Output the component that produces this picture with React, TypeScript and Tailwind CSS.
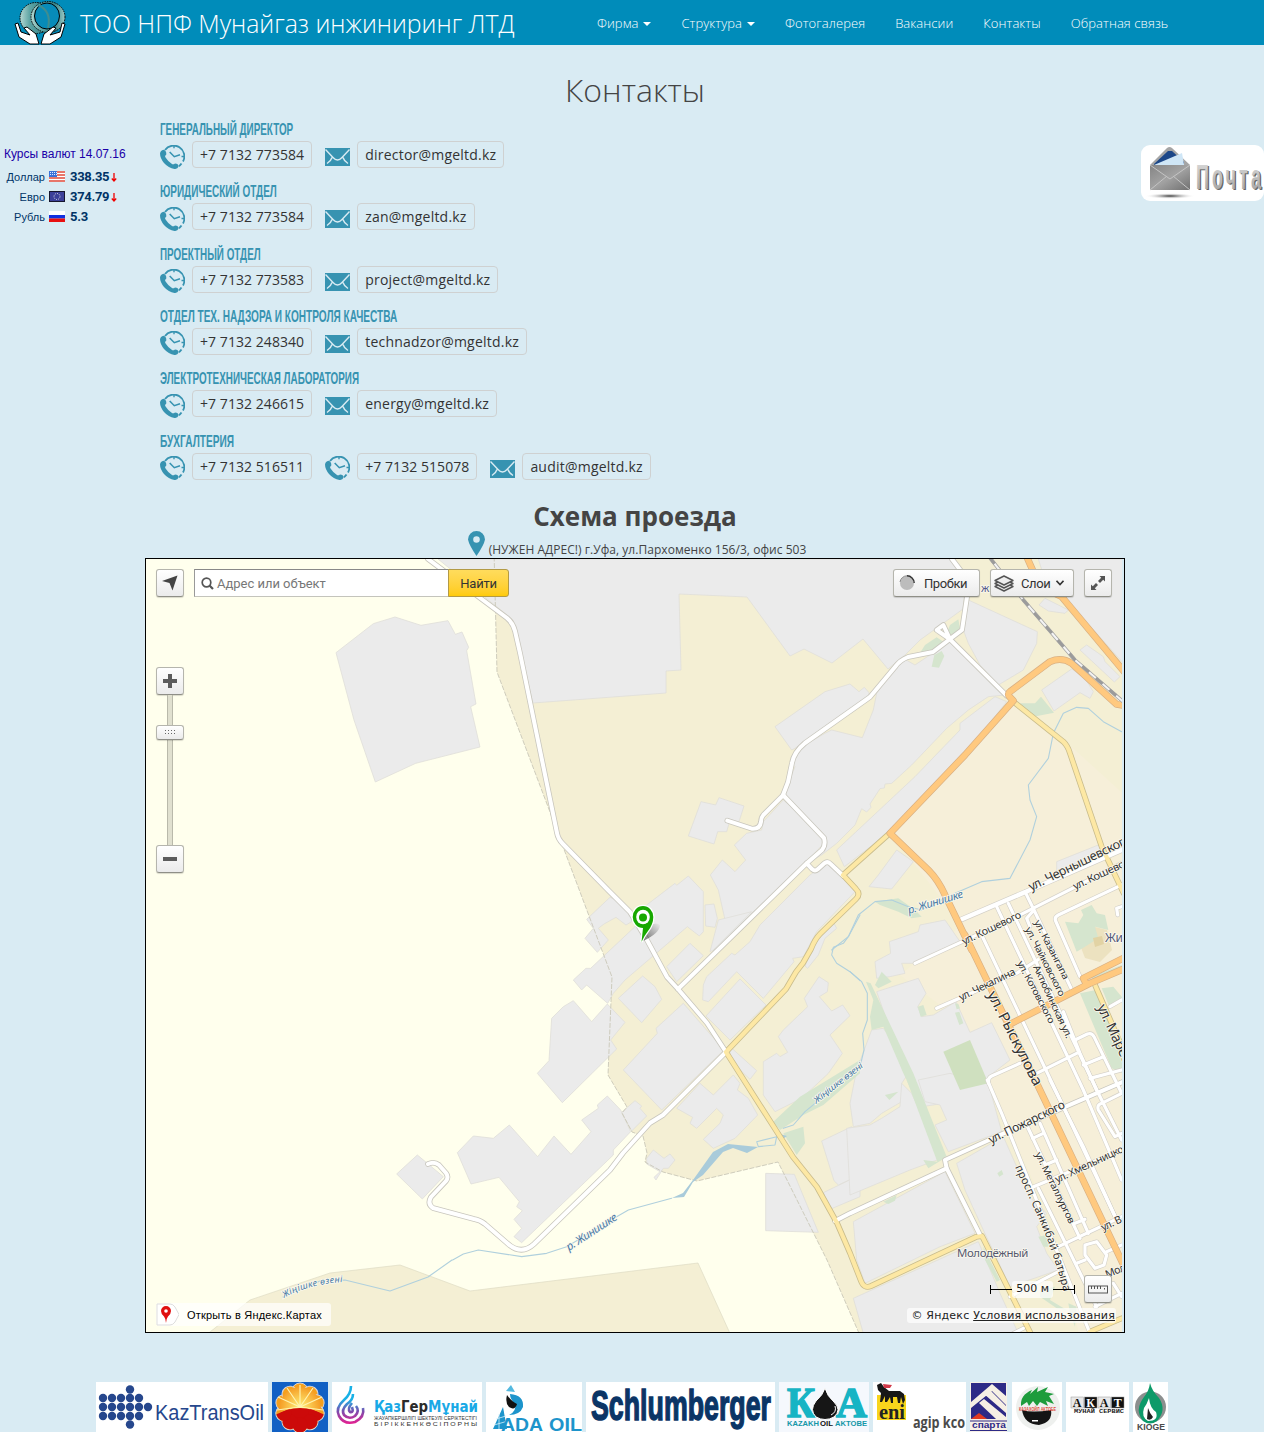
import React from "react";

type Frame = "A" | "B" | "C" | "D" | "E" | "P";
type Shape = [Frame, string];

/* Every tile of the map keeps its own local units; "P" is the map's base unit. */
const tiles: Record<Frame, { t: string; k: number }> = {
  A: { t: "translate(145 490) scale(.333333)", k: 3 },
  B: { t: "translate(635 550) scale(.333333)", k: 3 },
  C: { t: "translate(850 820) scale(.333333)", k: 3 },
  D: { t: "translate(850 1080) scale(.333333)", k: 3 },
  E: { t: "translate(380 860) scale(.333333)", k: 3 },
  P: { t: "translate(0 0)", k: 1 },
};

const blocks: Shape[] = [
  ["P", "M438 559 L513 620 L533 703 L666 693 L666 671 L681 670 L679 594 L747 597 L790 656 L804 649 L832 663 L863 639 L888 669 L905 655 L920 640 L963 609 L965 585 L952 559Z"],
  ["A", "M573 488 L685 401 L750 381 L828 406 L909 392 L931 433 L951 426 L971 472 L965 482 L993 642 L977 650 L1005 771 L812 820 L691 876 L627 690Z"],
  ["B", "M420 530 L570 425 L645 402 L672 425 L688 412 L702 428 L700 440 L480 595 L470 600Z"],
  ["B", "M725 430 L770 365 L810 328 L840 345 L895 308 L950 270 L1000 330 L1110 435 L1060 440 L1000 480 L935 535 L830 645 L770 700 L750 702 L748 714 L735 716 L705 762 L708 772 L695 786 L680 776 L660 825 L605 880 L560 915 L515 940 L570 890 L568 855 L445 735 L460 700 L480 650 L470 640 L500 590 L570 550 L590 540 L682 563 L715 480Z"],
  ["B", "M445 750 L385 815 L380 840 L335 850 L298 885 L332 930 L300 965 L262 930 L226 975 L250 1020 L268 1100 L270 1110 L235 1205 L245 1200 L510 940 L562 885 L560 850Z"],
  ["B", "M1080 440 L1115 455 L1000 600 L765 845 L628 950 L605 900 L840 680 L975 540 L975 520Z"],
  ["B", "M160 858 L198 755 L242 765 L252 743 L327 768 L312 815 L285 810 L275 845 L248 845 L237 882Z"],
  ["B", "M1000 150 L1207 245 L1205 280 L1165 360 L1090 405 L1035 345 L1000 280 L985 240Z"],
  ["B", "M1220 420 L1310 357 L1350 385 L1375 425 L1365 445 L1335 428 L1257 483Z"],
  ["B", "M1335 300 L1355 285 L1405 320 L1410 335 L1455 380 L1438 396Z"],
  ["B", "M1210 27 L1470 27 L1470 345 L1290 145 L1230 90Z"],
  ["B", "M1212 165 L1230 145 L1300 180 L1290 190 L1240 183Z"],
  ["B", "M702 1010 L730 975 L785 900 L835 935 L770 1017Z"],
  ["B", "M1265 935 L1390 885 L1405 905 L1265 965Z"],
  ["E", "M620 178 L690 112 L712 120 L755 165 L755 185 L738 195 L708 172 L672 192 L655 205 L685 240 L652 277 L615 235 L640 205Z"],
  ["E", "M800 135 L885 70 L890 76 L925 48 L970 95 L970 215 L958 228 L922 200 L735 360 L700 400 L683 430 L620 375 L605 390 L580 360 L618 325 L632 325 L765 200Z"],
  ["E", "M975 135 L1002 132 L1012 175 L1005 202 L977 198Z"],
  ["E", "M860 320 L930 250 L970 287 L890 365Z"],
  ["E", "M715 415 L788 348 L825 380 L845 418 L785 488Z"],
  ["E", "M1015 180 L1115 155 L1000 270 L990 275Z"],
  ["E", "M968 420 L970 375 L980 350 L1055 280 L1065 285 L1110 245 L1140 195 L1290 45 L1345 5 L1390 55 L1425 95 L1310 215 L1270 290 L1238 295 L1242 305 L1150 415 L1070 335 L985 425Z"],
  ["E", "M978 468 L1080 357 L1158 435 L1050 540Z"],
  ["E", "M730 630 L832 520 L828 505 L910 430 L1032 570 L845 750Z"],
  ["E", "M1050 560 L1130 632 L1110 658 L1050 600Z"],
  ["E", "M890 745 L960 670 L1000 705 L1060 645 L1080 670 L1072 690 L1105 715 L1133 765 L1065 835 L1000 865 L970 838 L1020 790 L1030 765 L1010 745 L950 805 L930 790 L938 772Z"],
  ["E", "M472 640 L507 602 L515 475 L550 440 L580 422 L635 485 L682 432 L735 487 L692 540 L710 567 L547 728Z"],
  ["E", "M232 878 L280 828 L340 835 L388 795 L473 890 L522 828 L573 883 L633 815 L605 780 L655 745 L652 735 L682 708 L722 750 L752 815 L700 870 L700 885 L425 1148 L402 1130 L425 1105 L402 1078 L427 1052 L410 1040 L418 1025 L357 952 L273 972Z"],
  ["E", "M50 942 L112 885 L190 950 L127 1017Z"],
  ["E", "M725 757 L765 722 L785 738 L780 745 L800 768 L755 813Z"],
  ["E", "M800 895 L820 870 L852 895 L870 882 L885 900 L865 925 L850 925 L828 960 L822 952 L840 935 L800 912Z"],
  ["E", "M1157 940 L1243 943 L1315 1117 L1157 1112Z"],
  ["E", "M1150 605 L1190 580 L1200 590 L1223 577 L1195 530 L1210 510 L1283 440 L1273 415 L1317 350 L1345 368 L1342 395 L1318 410 L1355 453 L1388 435 L1410 467 L1350 525 L1387 580 L1345 640 L1265 715 L1185 755 L1150 705Z"],
  ["E", "M1370 205 L1335 235 L1315 285 L1283 325 L1275 318 L1320 215 L1362 190Z"],
  ["E", "M1325 843 L1415 800 L1445 900 L1440 945 L1375 975 L1362 962Z"],
  ["E", "M1330 998 L1440 945 L1440 1010 L1350 1048Z"],
  ["C", "M75 425 L80 475 L120 470 L165 460 L155 430 L190 430 L330 365 L285 300 L210 315 L205 335 L118 365 L122 400Z"],
  ["C", "M80 515 L205 475 L228 520 L203 560 L215 590 L250 585 L318 545 L360 637 L425 608 L480 720 L415 770 L415 830 L215 860 L180 760 L110 600Z"],
  ["C", "M20 750 L65 630 L100 625 L140 680 L175 760 L155 790 L155 845 L95 880 L60 910 L10 920 L0 850Z"],
  ["D", "M-10 145 L60 135 L95 115 L150 80 L155 10 L185 40 L275 235 L180 270 L0 345Z"],
  ["D", "M205 0 L300 -20 L415 10 L455 155 L295 215 L255 135 L290 120 L270 75 L225 65Z"],
  ["D", "M10 425 L285 275 L375 460 L270 500 L45 610 L20 540Z"],
  ["D", "M320 250 L460 170 L540 350 L590 400 L560 440 L590 520 L625 570 L480 620 L400 450 L345 330Z"],
  ["D", "M10 655 L385 485 L450 640 L505 760 L40 760Z"],
];

const greens: Shape[] = [
  ["B", "M845 325 L870 285 L905 262 L925 275 L890 300Z"],
  ["B", "M890 350 L898 315 L920 303 L928 318 L912 353Z"],
  ["B", "M935 250 L945 225 L970 208 L975 235 L955 255Z"],
  ["B", "M1155 460 L1200 460 L1218 440 L1257 488 L1195 500Z"],
  ["B", "M720 1055 L790 1045 L840 1080 L860 1100 L830 1105 L790 1085 L735 1065Z"],
  ["B", "M1290 1115 L1330 1120 L1345 1095 L1338 1080 L1370 1065 L1385 1090 L1410 1095 L1420 1140 L1380 1130 L1390 1165 L1350 1190 L1325 1205Z"],
  ["C", "M75 495 L95 455 L125 485 L85 505Z M203 560 L220 555 L230 585 L212 590Z M315 550 L325 552 L330 565 L320 568Z M315 578 L328 575 L340 610 L328 615Z"],
  ["C", "M48 485 L62 490 L190 760 L290 1010 L280 1010 L160 760 L100 620 L65 630 L60 590 L70 540Z"],
  ["C", "M690 520 L738 510 L820 690 L820 760 L785 745Z M755 505 L790 500 L815 530 L815 545 L780 565Z M725 470 L815 435 L815 445 L730 482Z"],
  ["E", "M1180 785 L1260 710 L1440 600 L1440 640 L1330 735 L1270 765 L1200 810Z M1210 820 L1270 800 L1275 850 L1250 885Z"],
  ["D", "M170 0 L190 0 L285 230 L275 240 L235 265 L220 240 L262 245Z M100 365 L140 345 L135 362 L115 372Z M442 280 L455 270 L460 283 L448 290Z M105 45 L145 35 L118 60Z"],
  ["D", "M400 500 L415 530 L450 600 L440 605 L405 540Z M565 470 L590 465 L600 500 L580 500Z M570 630 L615 620 L600 660 L650 690 L620 685 L570 650Z M655 670 L680 680 L675 740 L660 700Z"],
];

const park: Shape[] = [["C", "M280 695 L360 660 L415 790 L330 810Z"]];

const streams: Shape[] = [
  ["B", "M1460 545 L1405 515 L1360 475 L1325 472 L1285 490 L1255 550 L1240 625 L1180 705 L1185 750 L1205 800 L1185 870 L1125 985 L1040 995 L960 1030 L860 1080 L820 1070 L770 1050 L720 1055 L670 1095 L640 1160 L590 1200"],
  ["E", "M1440 165 L1405 230 L1390 250 L1360 262 L1355 285 L1370 310 L1410 335 L1440 362"],
  ["C", "M0 455 L35 485 L52 520 L52 600 L38 640 L42 690 L30 740 L-80 830 L-135 875 L-170 915 L-200 925"],
  ["E", "M1190 830 L1130 845 L1135 860 L1185 855 L1190 830"],
  ["E", "M875 1015 L745 1050 L710 1070 L560 1160 L500 1180 L425 1190 L295 1170 L250 1182 L218 1200"],
  ["P", "M452 1260 L428 1277 L390 1291 L345 1280 L320 1281 L283 1297"],
];

const white: Shape[] = [
  ["P", "M428 559 L507 618 Q513 623 515 631 L520 653 L557 833 Q558 839 563 844 L608 890 L630 912 L647 940 L667 977 L678 989 L707 1023 L726 1052 L663 1115 L650 1123 L623 1153 L610 1170 L534 1244 Q521 1256 507 1243 L485 1224 Q480 1220 474 1219 L433 1208 Q427 1204 431 1197 L446 1181 Q449 1177 446 1173 L439 1165 Q434 1161 428 1164"],
  ["P", "M678 989 L807 863 L822 850 Q826 845 824 838 L783 795 L788 782 L792 763 Q794 752 805 743 L870 697 L895 667 Q900 660 908 657 L933 652 L950 639 L962 630 L967 597 L964 575 L952 559"],
  ["B", "M445 735 L385 795 Q378 803 378 815 Q375 838 350 836 L277 812"],
  ["B", "M515 940 L532 958 Q540 965 548 958 L568 940 Q577 932 586 941 L625 978"],
  ["B", "M1115 437 L945 268 L905 240 L925 225 L945 268"],
  ["D", "M-45 423 L0 400 L290 265 L285 240 L450 165 L820 5"],
  ["D", "M290 265 L390 465"],
];

const avenue: Shape[] = [["C", "M335 298 L540 210 L820 88"]];

const streets: Shape[] = [
  ["C", "M195 430 L500 290 L815 130"],
  ["C", "M260 565 L500 460 L570 415"],
  ["C", "M395 345 L640 860 L800 1200"],
  ["C", "M440 260 L700 810 L815 1080"],
  ["C", "M475 250 L740 810 L815 960"],
  ["C", "M525 215 L552 270 L530 295 L540 320 M552 270 L668 515"],
  ["C", "M815 195 L625 285 Q612 292 617 303 L690 470"],
  ["C", "M815 260 L800 265 L803 285"],
  ["C", "M510 730 L425 768 Q412 775 416 790"],
  ["C", "M560 760 L680 700 M640 575 L690 700 L740 810 M675 660 L712 642 Q725 637 732 650 L815 820 M700 735 L760 710 M720 775 L815 750"],
  ["C", "M780 560 L815 540"],
  ["D", "M412 0 L455 100 L720 760"],
  ["D", "M600 0 L700 200 L800 420 M815 160 L795 170 L745 90 Q740 75 755 70 L815 40"],
  ["D", "M540 325 L815 210 M625 500 L815 410 M530 135 L690 475 M565 325 L740 680"],
  ["D", "M570 130 L715 460 M548 175 L580 160 M585 255 L620 240 M675 430 L705 418"],
  ["D", "M480 650 L625 575 M680 550 L705 540 M770 515 L815 495"],
  ["D", "M705 495 L740 485 L770 525 L762 555 L735 565 L705 525Z"],
  ["D", "M735 680 L815 640 M790 610 L815 650 M490 760 L520 745"],
];

const yellow: Shape[] = [
  ["P", "M890 833 L843 875 L856 889 Q861 894 856 899 L820 934 Q815 939 811 949 L803 963 L796 972 L786 989 L726 1052 L793 1157 L817 1187 L837 1223 L850 1253 L861 1281 Q864 1289 871 1286 L976 1237 L982 1236 L1031 1334"],
  ["B", "M1135 455 L1285 575 Q1298 587 1305 610 L1400 890 L1466 1030"],
  ["C", "M735 495 L820 690"],
  ["D", "M720 755 L815 715"],
];

const orange: Shape[] = [
  ["B", "M1175 20 L1215 110 L1280 140 L1470 368"],
  ["B", "M1470 467 L1445 463 L1310 340 Q1280 320 1245 335 L1125 425 Q1115 432 1125 442 L1135 452 L990 615 L765 850 L880 960 Q910 990 930 1035 L1010 1200"],
  ["P", "M965 935 L1040 1090 L1124 1266"],
  ["C", "M485 610 L720 490 L825 445 M710 495 L700 475 L825 412"],
];

type Label = { x: number; y: number; r: number; s: number; w?: number; t: string; c?: string; i?: boolean };
const labels: Label[] = [
  { x: 1031, y: 891, r: -26, s: 12.5, w: 112, t: "ул. Чернышевского" },
  { x: 1075, y: 890, r: -25, s: 10.5, w: 66, t: "ул. Кошевого" },
  { x: 964, y: 945, r: -25.5, s: 10.5, w: 64, t: "ул. Кошевого" },
  { x: 909, y: 914, r: -17, s: 11, w: 57, t: "р. Жинишке", c: "#4a7ba6", i: true },
  { x: 1034, y: 922, r: 63, s: 9.5, w: 65, t: "ул. Казангапа" },
  { x: 1025, y: 929, r: 63, s: 9.5, w: 76, t: "ул. Чайковского" },
  { x: 1017, y: 963, r: 62, s: 9.5, w: 69, t: "ул. Котовского" },
  { x: 1033, y: 967, r: 65, s: 9.5, w: 79, t: "Актюбинская ул." },
  { x: 961, y: 1001, r: -26, s: 10.5, w: 61, t: "ул. Чекалина" },
  { x: 987, y: 994, r: 63, s: 14.5, w: 104, t: "ул. Рыскулова" },
  { x: 1097, y: 1007, r: 65, s: 14, t: "ул. Маресьева" },
  { x: 1105, y: 942, r: 0, s: 12, t: "Жи", c: "#555b7a" },
  { x: 981, y: 592, r: 0, s: 11, t: "ж", c: "#555b8a" },
  { x: 991, y: 1144, r: -26, s: 12, w: 83, t: "ул. Пожарского" },
  { x: 1057, y: 1183, r: -25, s: 10.5, w: 84, t: "ул. Хмельницкого" },
  { x: 1035, y: 1154, r: 64, s: 9.5, w: 78, t: "ул. Металлургов" },
  { x: 1103, y: 1231, r: -25, s: 10.5, t: "ул. В" },
  { x: 1107, y: 1278, r: -22, s: 10.5, t: "Мол" },
  { x: 957, y: 1257, r: 0, s: 11.5, w: 71, t: "Молодёжный", c: "#555870" },
  { x: 816, y: 1104, r: -38, s: 9, w: 60, t: "Жіңішке өзені", c: "#4a7ba6", i: true },
  { x: 569, y: 1251, r: -33, s: 11, w: 58, t: "р. Жинишке", c: "#4a7ba6", i: true },
];

function Lines({ list, color, width, cap = "round" }: { list: Shape[]; color: string; width: number; cap?: "round" | "butt" }) {
  return (
    <g fill="none" stroke={color} strokeLinecap={cap} strokeLinejoin="round">
      {list.map(([f, d], i) => (
        <path key={i} d={d} transform={tiles[f].t} strokeWidth={width * tiles[f].k} />
      ))}
    </g>
  );
}

function Areas({ list, fill, stroke }: { list: Shape[]; fill: string; stroke?: string }) {
  return (
    <g fill={fill} stroke={stroke}>
      {list.map(([f, d], i) => (
        <path key={i} d={d} transform={tiles[f].t} strokeWidth={0.8 * tiles[f].k} />
      ))}
    </g>
  );
}

const rail: Shape[] = [["B", "M1062 20 L1165 150 L1320 330 L1470 460"]];

function MapDrawing() {
  return (
    <svg viewBox="146 559 976 773" className="block h-[773px] w-[976px]" fontFamily="'Noto Sans', sans-serif">
      <rect x="146" y="559" width="978" height="773" fill="#ffffed" />
      <path
        d="M494 550 L497 672 L550 812 L568 860 L612 977 L608 1075 L627 1107 L622 1113 L632 1132 L643 1136 L647 1153 L645 1162 L663 1172 L697 1181 L778 1162 L827 1260 L862 1340 L1130 1340 L1130 550Z"
        fill="#f4efd4"
      />
      <path d="M250 1300 L330 1273 L400 1265 L470 1291 L698 1263 L733 1340 L200 1340Z" fill="#f4efd4" stroke="#dedbc4" strokeWidth=".7" />
      <path d="M1013 702 L890 833 L962 925 L900 975 L960 1020 L1060 1240 L1080 1340 L1130 1340 L1130 800 L1075 750Z" fill="#f6efd9" />
      <Areas list={blocks} fill="#ebebeb" stroke="#dfded9" />
      <path
        d="M494 550 L497 672 L550 812 L568 860 L612 977 L608 1075 L627 1107 L622 1113 L632 1132 L643 1136 L647 1153 L645 1162 L663 1172 L697 1181 L778 1162 L827 1260 L862 1340"
        fill="none"
        stroke="#c9c7b8"
        strokeWidth=".9"
        strokeDasharray="5 1.500"
      />
      <path d="M1095 927 L1107 930 L1112 950 L1100 962 L1085 958 L1080 945Z" fill="#ece2c0" />
      <Areas list={greens} fill="#d5e5ce" />
      <Areas list={park} fill="#cfe0bf" />
      <path d="M1093 938 L1102 936 L1104 944 L1095 947Z" fill="#e2d3a4" />
      <Lines list={streams} color="#b0d0dd" width={1.1} />
      <path d="M758 1147 L747 1153 L733 1148 L723 1152 L703 1175 L693 1182 L684 1197 L672 1198 L683 1193 L693 1180 L713 1152 L728 1144Z M780 1134 L787 1136 L783 1139Z" fill="#a9cbda" />
      <Lines list={streets} color="#d3d0c8" width={4.4} />
      <Lines list={avenue} color="#d3d0c8" width={5.6} />
      <Lines list={white} color="#c8c6bd" width={5.6} />
      <Lines list={yellow} color="#c9bc8c" width={5.8} />
      <Lines list={streets} color="#ffffff" width={3.2} />
      <Lines list={avenue} color="#ffffff" width={4.4} />
      <Lines list={white} color="#ffffff" width={4} />
      <Lines list={yellow} color="#fde8a4" width={4.2} />
      <Lines list={orange} color="#d9b083" width={7} />
      <Lines list={orange} color="#ffc97f" width={5.6} />
      <Lines list={rail} color="#a5a5a5" width={3.6} cap="butt" />
      <Lines list={rail} color="#f4f4f4" width={2} cap="butt" />
      <path d={rail[0][1]} transform={tiles.B.t} fill="none" stroke="#9b9b9b" strokeWidth="9" strokeDasharray="27 27" />
      {labels.map((l, i) => (
        <text
          key={i}
          transform={`translate(${l.x} ${l.y}) rotate(${l.r})`}
          fontSize={l.s}
          textLength={l.w}
          lengthAdjust="spacingAndGlyphs"
          fill={l.c ?? "#333"}
          fontStyle={l.i ? "italic" : undefined}
          stroke="#fbf9ee"
          strokeWidth="1.600"
          strokeLinejoin="round"
          paintOrder="stroke"
        >
          {l.t}
        </text>
      ))}
      <path id="prospect" d="M1015 1167 L1032 1204 Q1052 1246 1064 1293 L1068 1305" fill="none" />
      <text fontSize="11" fill="#333" stroke="#fbf9ee" strokeWidth="1.600" paintOrder="stroke">
        <textPath href="#prospect" textLength="134">просп. Санкибай батыра</textPath>
      </text>
      <path id="creek" d="M284 1298 Q308 1284 345 1282" fill="none" />
      <text fontSize="9" fontStyle="italic" fill="#4a7ba6" stroke="#fbf9ee" strokeWidth="1.600" paintOrder="stroke">
        <textPath href="#creek" textLength="61">Жіңішке өзені</textPath>
      </text>
      <defs>
        <linearGradient id="pinShade" x1="0" y1="1" x2="1" y2="0">
          <stop offset="0" stopColor="#000" stopOpacity=".55" />
          <stop offset="1" stopColor="#000" stopOpacity="0" />
        </linearGradient>
      </defs>
      <path d="M643 941 L650 925 Q657 922 660 925 Q660 933 643 941Z" fill="url(#pinShade)" />
      <path
        d="M643 906 A10.300 11 0 0 1 653.300 917 Q653.300 924 648 931 Q644 936 641.500 942 L643 928 A10.300 11 0 0 1 643 906Z"
        fill="#18a800"
        stroke="#fff"
        strokeWidth="2.500"
        paintOrder="stroke"
      />
      <ellipse cx="643" cy="917" rx="6.800" ry="7.300" fill="#fff" />
      <circle cx="643" cy="917.500" r="4" fill="#18a800" />
    </svg>
  );
}

const control =
  "flex h-[28px] items-center justify-center rounded-[3px] border border-[#b5b5ad] border-b-[#8f8f87] bg-linear-to-b from-white to-[#ebebeb] shadow-[0_1px_1px_rgba(0,0,0,.15)]";

function MapView() {
  return (
    <div className="relative h-[775px] w-[980px] overflow-hidden border border-black bg-[#d9ebf3] font-['Roboto',sans-serif] text-[13px] tracking-[-.4px] text-[#333]">
      <MapDrawing />
      <div className="absolute inset-x-[10px] top-[10px] flex items-center">
        <div className={`${control} w-[28px]`}>
          <svg viewBox="0 0 16 16" className="h-[16px] w-[16px]">
            <path d="M15.500 .5 L0 6 L7.500 8 L10.500 15.500Z" fill="#444" />
          </svg>
        </div>
        <div className="ml-[10px] flex h-[28px] w-[255px] items-center border border-[#c4c4bc] border-t-[#888] border-l-[#999] bg-white pl-[6px] text-[#777]">
          <svg viewBox="0 0 13 13" className="h-[13px] w-[13px]">
            <circle cx="5.500" cy="5.500" r="4.300" fill="none" stroke="#555" strokeWidth="1.700" />
            <path d="M8.500 8.500 L12 12" stroke="#555" strokeWidth="2.200" />
          </svg>
          <span className="ml-[3px] text-[13px] tracking-[-.02px]">Адрес или объект</span>
        </div>
        <div className="-ml-px flex h-[28px] w-[61px] items-center justify-center rounded-r-[3px] border border-[#b39a45] bg-linear-to-b from-[#ffdc5c] to-[#ffcb05] tracking-[-.2px]">Найти</div>
        <div className={`${control} ml-auto w-[87px] justify-start pl-[5px]`}>
          <svg viewBox="0 0 16 16" className="mr-[9px] h-[16px] w-[16px]">
            <circle cx="8" cy="8" r="7" fill="#bcbcbc" />
            <path d="M8 .8 A7.200 7.200 0 0 1 15.200 8" fill="none" stroke="#333" strokeWidth="1.400" />
            <path d="M8 .8 A7.200 7.200 0 0 0 1 7" fill="none" stroke="#888" strokeWidth="1" />
          </svg>
          <span>Пробки</span>
        </div>
        <div className={`${control} ml-[10px] w-[84px] justify-start pl-[3px]`}>
          <svg viewBox="0 0 20 17" className="mr-[7px] h-[17px] w-[20px]" fill="#eee" stroke="#555" strokeWidth="1.400" strokeLinejoin="round">
            <path d="M1 11.500 L10 16 L19 11.500 L10 7Z" />
            <path d="M1 8.500 L10 13 L19 8.500 L10 4Z" />
            <path d="M1 5.500 L10 10 L19 5.500 L10 1Z" />
          </svg>
          <span>Слои</span>
          <svg viewBox="0 0 8 6" className="ml-[6px] h-[6px] w-[8px]">
            <path d="M.5 .8 L4 4.500 L7.500 .8" fill="none" stroke="#333" strokeWidth="1.600" />
          </svg>
        </div>
        <div className={`${control} mr-[2px] ml-[10px] w-[28px]`}>
          <svg viewBox="0 0 14 14" className="h-[14px] w-[14px]" fill="#555">
            <path d="M8.500 0 H14 V5.500 L12.200 3.800 L9 7 L7 5 L10.200 1.800Z M5.500 14 H0 V8.500 L1.800 10.200 L5 7 L7 9 L3.800 12.200Z" />
          </svg>
        </div>
      </div>
      <div className="absolute top-[108px] left-[10px] flex w-[28px] flex-col items-center">
        <div className={`${control} w-[28px]`}>
          <svg viewBox="0 0 14 14" className="h-[14px] w-[14px]">
            <path d="M7 0 V14 M0 7 H14" stroke="#5c5c5c" strokeWidth="4" />
          </svg>
        </div>
        <div className="flex h-[150px] w-[6px] flex-col border-x border-[#b9b9aa] bg-[#e0e0cf] pt-[30px]">
          <div className={`${control} -ml-[12px] h-[15px]! w-[28px]`}>
            <svg viewBox="0 0 11 5" className="h-[5px] w-[11px]" fill="#666">
              {[0, 3, 6, 9].map((x) => (
                <React.Fragment key={x}>
                  <rect x={x} y="0" width="1" height="1" />
                  <rect x={x} y="3" width="1" height="1" />
                </React.Fragment>
              ))}
            </svg>
          </div>
        </div>
        <div className={`${control} w-[28px]`}>
          <div className="h-[4px] w-[14px] bg-[#5c5c5c]" />
        </div>
      </div>
      <div className="absolute bottom-[6px] left-[10px] flex h-[23px] w-[175px] items-center rounded-[3px] bg-white/70 font-['Liberation_Sans',sans-serif] text-black">
        <svg viewBox="0 0 23 23" className="h-[23px] w-[23px]">
          <path d="M1 1 H14 Q17 1 19 4 L23 11.500 L19 19 Q17 22 14 22 H1Z" fill="#fff" stroke="#ddd" />
          <path d="M10 3 A5 5 0 0 1 15 8 Q15 11 12 13.500 Q10 16 10 20 Q10 16 8 13.500 Q5 11 5 8 A5 5 0 0 1 10 3Z" fill="#e01010" />
          <circle cx="10" cy="8" r="1.800" fill="#fff" />
        </svg>
        <span className="ml-[8px] text-[11px] tracking-[.21px] whitespace-nowrap">Открыть в Яндекс.Картах</span>
      </div>
      <div className="absolute right-[8px] bottom-[9px] flex flex-col items-end font-['DejaVu_Sans',sans-serif] text-[11px] tracking-normal text-[#222]">
        <div className="mb-[5px] flex items-center pr-[4px]">
          <div className="mr-[9px] flex items-center">
            <div className="h-[9px] w-px bg-black" />
            <div className="h-px w-[21px] bg-black" />
            <span className="rounded-[3px] bg-white/70 px-[4px]">500 м</span>
            <div className="h-px w-[21px] bg-black" />
            <div className="h-[9px] w-px bg-black" />
          </div>
          <div className={`${control} w-[28px]`}>
            <svg viewBox="0 0 20 9" className="h-[9px] w-[20px]" fill="none" stroke="#555">
              <rect x=".5" y="1" width="19" height="7" />
              <path d="M3.500 1 V4 M6.500 1 V4 M9.500 1 V4 M12.500 1 V4 M16.500 3 V4.500" />
            </svg>
          </div>
        </div>
        <div className="flex h-[15px] items-center rounded-[3px] bg-white/70 pr-[1px] pl-[4px] tracking-[.2px] whitespace-nowrap">
          © Яндекс&nbsp;<span className="underline">Условия использования</span>
        </div>
      </div>
    </div>
  );
}

function Phone() {
  return (
    <svg viewBox="0 0 25 24" className="h-[24px] w-[25px]" fill="none" stroke="#3793b1">
      <path d="M5 5 A10.700 10.700 0 0 1 23 16.500 M21.500 18.600 Q20.500 20.200 19 21.200" strokeWidth="1.800" />
      <path d="M9.700 7 L14.300 11.700 L20 9.700" strokeWidth="1.600" />
      <path d="M14 1 V3.300 M24 11.500 H21.500" strokeWidth="1.400" />
      <path
        d="M0 8.500 Q.5 5.200 3.500 4.800 Q6.500 5.500 6.300 9.500 Q4.500 11 5.400 12.200 Q8 16.500 12.300 19.300 Q13.800 19.500 15 18.400 Q18.500 18.500 18.600 21.500 Q17.500 24.200 14.500 24 Q8.500 23 4 18 Q0 13 0 8.500Z"
        fill="#3793b1"
        stroke="none"
      />
    </svg>
  );
}

function Envelope() {
  return (
    <svg viewBox="0 0 25 18" className="mt-px h-[18px] w-[25px]">
      <rect width="25" height="18" fill="#3793b1" />
      <path d="M.5 1.500 L8 9.500 Q12.500 14.500 17 9.500 L24.500 1.500 M2 15.500 Q6 13 7 9.500 M23 15.500 Q19 13 18 9.500" fill="none" stroke="#d9ebf3" strokeWidth="1.400" />
    </svg>
  );
}

type Row = { title: string; w: string; phones: string[]; mail: string };
const rows: Row[] = [
  { title: "ГЕНЕРАЛЬНЫЙ ДИРЕКТОР", w: "scale-x-[.581]", phones: ["+7 7132 773584"], mail: "director@mgeltd.kz" },
  { title: "ЮРИДИЧЕСКИЙ ОТДЕЛ", w: "scale-x-[.587]", phones: ["+7 7132 773584"], mail: "zan@mgeltd.kz" },
  { title: "ПРОЕКТНЫЙ ОТДЕЛ", w: "scale-x-[.58]", phones: ["+7 7132 773583"], mail: "project@mgeltd.kz" },
  { title: "ОТДЕЛ ТЕХ. НАДЗОРА И КОНТРОЛЯ КАЧЕСТВА", w: "scale-x-[.5925]", phones: ["+7 7132 248340"], mail: "technadzor@mgeltd.kz" },
  { title: "ЭЛЕКТРОТЕХНИЧЕСКАЯ ЛАБОРАТОРИЯ", w: "scale-x-[.5805]", phones: ["+7 7132 246615"], mail: "energy@mgeltd.kz" },
  { title: "БУХГАЛТЕРИЯ", w: "scale-x-[.596]", phones: ["+7 7132 516511", "+7 7132 515078"], mail: "audit@mgeltd.kz" },
];

function Field({ icon, text, mail }: { icon: React.ReactNode; text: string; mail?: boolean }) {
  return (
    <div className="mr-[13px] flex">
      <div className="flex h-[31px] w-[25px] items-center">{icon}</div>
      <div
        className={`ml-[7px] h-[27px] rounded-[4px] border border-[#cfd1d1] px-[7px] text-[14px] leading-[25px] text-[#333] ${mail ? "tracking-[.22px]" : "tracking-[.06px]"}`}
      >
        {text}
      </div>
    </div>
  );
}

function Contacts() {
  return (
    <div className="pl-[15px]">
      {rows.map((r) => (
        <div key={r.title} className="h-[62.330px]">
          <div className={`h-[23px] origin-left font-['Liberation_Sans',sans-serif] text-[17px] leading-[23px] font-bold whitespace-nowrap text-[#3793b1] ${r.w}`}>{r.title}</div>
          <div className="flex">
            {r.phones.map((p) => (
              <Field key={p} icon={<Phone />} text={p} />
            ))}
            <Field icon={<Envelope />} text={r.mail} mail />
          </div>
        </div>
      ))}
    </div>
  );
}

function HandsLogo() {
  return (
    <svg viewBox="0 0 52 44" className="h-[44px] w-[52px]">
      <defs>
        <linearGradient id="globe">
          <stop offset="0" stopColor="#b5d8d2" />
          <stop offset=".3" stopColor="#5fa5a5" />
          <stop offset=".7" stopColor="#3a8588" />
          <stop offset="1" stopColor="#9ccac6" />
        </linearGradient>
      </defs>
      <ellipse cx="22" cy="17" rx="16" ry="15.500" fill="url(#globe)" stroke="#000" strokeDasharray="1.500 1" />
      <ellipse cx="34" cy="16" rx="17" ry="15.500" fill="url(#globe)" stroke="#000" strokeDasharray="1.500 1" />
      <ellipse cx="33" cy="15" rx="12.500" ry="13" fill="#078bb9" stroke="#000" />
      <path d="M24 4 Q38 10 34 27" fill="none" stroke="#3f8d90" strokeWidth="2" />
      <g fill="#fff" stroke="#000" strokeWidth="1" strokeLinejoin="round">
        <path d="M1 23 L4 22 L7 31 L16 34 L10 27 L13 26 L22 33 L25 43 H16 L5 36Z" />
        <path d="M51 23 L48 22 L46 31 L36 34 L42 27 L39 26 L30 33 L27 43 H36 L47 36Z" />
      </g>
    </svg>
  );
}

const nav: { t: string; caret?: boolean }[] = [
  { t: "Фирма", caret: true },
  { t: "Структура", caret: true },
  { t: "Фотогалерея" },
  { t: "Вакансии" },
  { t: "Контакты" },
  { t: "Обратная связь" },
];

function Header() {
  return (
    <header className="flex h-[45px] items-center bg-[#008cba] font-light whitespace-nowrap text-white">
      <div className="ml-[14px]">
        <HandsLogo />
      </div>
      <div className="ml-[14px] w-[502px] pt-px text-[24.800px] leading-[45px]">ТОО НПФ Мунайгаз инжиниринг ЛТД</div>
      <nav className="flex pt-[2px] text-[13px] leading-[45px] tracking-[.07px]">
        {nav.map((n) => (
          <div key={n.t} className="flex items-center px-[15px]">
            {n.t}
            {n.caret && <span className="ml-[5px] border-x-4 border-t-4 border-x-transparent border-t-white" />}
          </div>
        ))}
      </nav>
    </header>
  );
}

function Flag({ kind }: { kind: string }) {
  return (
    <svg viewBox="0 0 16 11" className="h-[11px] w-[16px]">
      {kind === "us" && (
        <>
          <rect width="16" height="11" fill="#fff" />
          <path d="M0 1 H16 M0 4 H16 M0 7 H16 M0 10 H16" stroke="#e04a3a" strokeWidth="1.500" />
          <rect width="8" height="6" fill="#3a72d8" />
          <path d="M1 1.500 H8 M1 3.500 H8" stroke="#dde8ff" strokeDasharray="1 1" />
        </>
      )}
      {kind === "eu" && (
        <>
          <rect x=".5" y=".5" width="15" height="10" fill="#3b4099" stroke="#16162e" />
          <circle cx="8" cy="5.500" r="3" fill="none" stroke="#eee" strokeDasharray="1 1.300" />
        </>
      )}
      {kind === "ru" && (
        <>
          <rect width="16" height="4" fill="#fff" />
          <rect y="4" width="16" height="3.500" fill="#1030e0" />
          <rect y="7.500" width="16" height="3.500" fill="#e81010" />
        </>
      )}
    </svg>
  );
}

function Rates() {
  const items = [
    { n: "Доллар", f: "us", v: "338.35", d: true },
    { n: "Евро", f: "eu", v: "374.79", d: true },
    { n: "Рубль", f: "ru", v: "5.3", d: false },
  ];
  return (
    <div className="pt-[101px] font-['Liberation_Sans',sans-serif] text-[#003366]">
      <div className="h-[20px] pl-[4px] text-[12px] leading-[16px] text-[#1a00a8]">Курсы валют 14.07.16</div>
      {items.map((i) => (
        <div key={i.n} className="flex h-[20px] items-center">
          <span className="w-[45px] pt-[2px] text-right text-[11px]">{i.n}</span>
          <span className="ml-[4px]">
            <Flag kind={i.f} />
          </span>
          <span className="ml-[5px] pt-px font-['Roboto',sans-serif] text-[13px] font-bold tracking-[-.3px]">{i.v}</span>
          {i.d && (
            <svg viewBox="0 0 6 9" className="mt-[3px] ml-[2px] h-[9px] w-[6px]">
              <path d="M3 0 V8 M.8 5.500 L3 8 L5.200 5.500" fill="none" stroke="#f00000" strokeWidth="1.300" />
            </svg>
          )}
        </div>
      ))}
    </div>
  );
}

function MailBadge() {
  return (
    <svg viewBox="0 0 123 56" className="mt-[100px] ml-[16px] block h-[56px] w-[123px]">
      <defs>
        <linearGradient id="silver" x2="1" y2="1">
          <stop offset="0" stopColor="#858585" />
          <stop offset=".5" stopColor="#a2a2a2" />
          <stop offset="1" stopColor="#707070" />
        </linearGradient>
        <linearGradient id="word" x2="0" y2="1">
          <stop offset="0" stopColor="#e2e2e2" />
          <stop offset="1" stopColor="#9d9d9d" />
        </linearGradient>
        <radialGradient id="floor">
          <stop offset="0" stopColor="#333" />
          <stop offset="1" stopColor="#fff" stopOpacity="0" />
        </radialGradient>
      </defs>
      <rect width="123" height="56" rx="9" fill="#fff" />
      <ellipse cx="29" cy="51" rx="25" ry="3" fill="url(#floor)" />
      <path d="M9 20 L26 3 Q28.500 1 31 3 L49 20 V45 H9Z" fill="#a5a5a5" />
      <path d="M13 19 L27 6 H31 L43 17 V25 H13Z" fill="#1c4788" />
      <path d="M13 20 L41 8 L44 25 H14Z" fill="#cfe6f6" />
      <path d="M9 20 H49 V45 H9Z" fill="url(#silver)" />
      <path d="M9 20 L29 34 L49 20 M9 45 L26 31 M49 45 L32 31" fill="none" stroke="#c4c4c4" />
      <g transform="translate(55 44) scale(.5 1)" fontFamily="'Liberation Sans', sans-serif" fontWeight="bold" fontSize="36">
        <text x="2.500" y="1" fill="#666" textLength="130" lengthAdjust="spacing">
          Почта
        </text>
        <text fill="url(#word)" textLength="130" lengthAdjust="spacing">
          Почта
        </text>
      </g>
    </svg>
  );
}

function LText(p: { x: number; y: number; s: number; w: number; c: string; f?: string; b?: boolean; children: string }) {
  return (
    <text x={p.x} y={p.y} fontSize={p.s} textLength={p.w} lengthAdjust="spacingAndGlyphs" fill={p.c} fontFamily={p.f ?? "'Liberation Sans', sans-serif"} fontWeight={p.b ? "bold" : "normal"}>
      {p.children}
    </text>
  );
}

const dots: [number, number][] = [];
[16, 25, 34].forEach((y) => [7, 16, 25, 34, 43].forEach((x) => dots.push([x, y])));
dots.push([34, 7.5], [34, 42.5], [52, 25]);

function Partners() {
  return (
    <footer className="mt-[49px] flex h-[50px] gap-[4px] pl-[96px]">
      <svg viewBox="0 0 172 50" className="h-[50px] w-[172px] bg-white">
        {dots.map(([x, y], i) => (
          <circle key={i} cx={x} cy={y} r="4.200" fill="#26478d" />
        ))}
        <LText x={59} y={38} s={22} w={109} c="#26478d">KazTransOil</LText>
      </svg>
      <svg viewBox="0 0 56 50" className="h-[50px] w-[56px] bg-[#1160c4]">
        <defs>
          <radialGradient id="sun" gradientUnits="userSpaceOnUse" cx="28" cy="25" r="27">
            <stop offset="0" stopColor="#fff27a" />
            <stop offset="1" stopColor="#f2820a" />
          </radialGradient>
          <clipPath id="lower">
            <path d="M0 34 L15 28 Q28 24 41 28 L56 34 V50 H0Z" />
          </clipPath>
        </defs>
        <g fill="#f6a01c" stroke="#d8d5d8" strokeWidth="1">
          {[0, 36, 72, 108, 144, 180, 216, 252, 288, 324].map((a) => (
            <circle key={a} cx="28" cy="9" r="8" transform={`rotate(${a} 28 26)`} />
          ))}
        </g>
        <circle cx="28" cy="26" r="21" fill="url(#sun)" />
        <path d="M28 25 V3 M28 25 L15 6 M28 25 L41 6 M28 25 L6 15 M28 25 L50 15 M28 25 L5 28 M28 25 L51 28" stroke="#fff3b0" strokeWidth="1.200" />
        <g fill="#cc0a0a" clipPath="url(#lower)">
          <circle cx="28" cy="26" r="20" />
          {[108, 144, 180, 216, 252].map((a) => (
            <circle key={a} cx="28" cy="9" r="7.500" transform={`rotate(${a} 28 26)`} />
          ))}
        </g>
      </svg>
      <svg viewBox="0 0 150 50" className="h-[50px] w-[150px] bg-white">
        <defs>
          <linearGradient id="flame" gradientUnits="userSpaceOnUse" x1="0" y1="4" x2="0" y2="43">
            <stop offset=".35" stopColor="#19b1e6" />
            <stop offset=".65" stopColor="#7c4dae" />
            <stop offset="1" stopColor="#ef1c8e" />
          </linearGradient>
        </defs>
        <g fill="none" stroke="url(#flame)" strokeWidth="2.600">
          <path d="M19 4 Q19 12 12 18 Q3 26 7 34 Q12 43 23 40 Q33 35 31 26" />
          <path d="M21 12 Q21 18 15 22 Q9 28 12 33 Q17 38 23 34 Q28 29 24 24" />
          <path d="M20 21 Q15 27 18 30 Q22 31 20 25" />
        </g>
        <LText x={42} y={30} s={16} w={27} c="#19a9e6" b f="'DejaVu Sans', sans-serif">Қаз</LText>
        <LText x={69} y={30} s={16} w={27} c="#2b2b2b" b f="'DejaVu Sans', sans-serif">Гер</LText>
        <LText x={96} y={30} s={16} w={50} c="#19a9e6" b f="'DejaVu Sans', sans-serif">Мұнай</LText>
        <LText x={42} y={38} s={6} w={103} c="#333">ЖАУАПКЕРШІЛІГІ ШЕКТЕУЛІ СЕРІКТЕСТІГІ</LText>
        <LText x={42} y={43.5} s={5} w={103} c="#333">Б І Р І К К Е Н   К Ә С І П О Р Н Ы</LText>
      </svg>
      <svg viewBox="0 0 96 50" className="h-[50px] w-[96px] bg-white">
        <path d="M25 3 L29 10 L20 9Z" fill="#53b9df" />
        <path d="M24 12 Q38 13 37 25 Q34 33 23 33 Q31 29 29 22 Q24 17 24 12Z" fill="#1d94cb" />
        <path d="M21 13 Q19 21 23 25 Q29 29 31 22 Q26 20 21 13Z" fill="#111" />
        <path d="M7 47 L17 25 L21 47Z" fill="#1d94cb" />
        <path d="M8 43 L22 39 M10 37 L20 34 M13 32 L13 47" stroke="#d7f0fa" strokeWidth=".8" />
        <LText x={15} y={48.5} s={18} w={42} c="#1d94cb" b>ADA</LText>
        <LText x={63} y={48.5} s={18} w={33} c="#1d94cb" b>OIL</LText>
      </svg>
      <svg viewBox="0 0 189 50" className="h-[50px] w-[189px] bg-white">
        <g transform="translate(5 38) scale(.6 1)">
          <text fontSize="43" fontWeight="bold" fontFamily="'Liberation Sans', sans-serif" fill="#0b3566" stroke="#0b3566" strokeWidth="1.500" textLength="300" lengthAdjust="spacingAndGlyphs">
            Schlumberger
          </text>
        </g>
      </svg>
      <svg viewBox="0 0 90 50" className="h-[50px] w-[90px] bg-[#f5f8fd]">
        <g fontFamily="'Liberation Serif', serif" fontWeight="bold" fontSize="42" fill="#17b4c4" stroke="#17b4c4" strokeWidth="1.500">
          <text x="8" y="35" textLength="28" lengthAdjust="spacingAndGlyphs">К</text>
          <text x="57" y="35" textLength="31" lengthAdjust="spacingAndGlyphs">А</text>
        </g>
        <path d="M46 6 Q48 14 55 20 Q63 28 55 35 Q46 40 37 35 Q30 28 37 19 Q44 13 46 6Z" fill="#161616" stroke="#fff" />
        <path d="M56 24 Q58 30 52 33" stroke="#fff" fill="none" />
        <LText x={8} y={44} s={7} w={32} c="#1497a8" b>KAZAKH</LText>
        <LText x={41} y={44} s={7} w={13} c="#111" b>OIL</LText>
        <LText x={56} y={44} s={7} w={32} c="#1497a8" b>AKTOBE</LText>
      </svg>
      <svg viewBox="0 0 93 50" className="h-[50px] w-[93px] bg-white">
        <rect x="4" y="13" width="29" height="25" fill="#f8d51c" />
        <path d="M4 3 L8 1 L11 5 L16 9 H27 L31 12 L32 18 L30 22 L28 15 L27 21 L25 21 L24 15 L20 15 L20 21 L18 21 L17 15 L14 20 L12 20 L12 14 L9 20 L7 20 L8 11 L5 8Z" fill="#171717" />
        <path d="M10 2 L19 3 L17 6 L11 6Z" fill="#d23a4a" />
        <LText x={6} y={37} s={20} w={26} c="#222" b f="'Liberation Serif', serif">eni</LText>
        <LText x={40} y={46} s={16} w={52} c="#4a4a4a" b f="'Open Sans', sans-serif">agip kco</LText>
      </svg>
      <svg viewBox="0 0 37 50" className="h-[50px] w-[37px] bg-[#f7f0e6]">
        <rect x="1" y="1" width="35" height="36" fill="#2e2a86" />
        <path d="M1 20 L22 2 L36 14 V23 L22 9 L1 26Z M9 21 L14 17 L36 35 V37 H26Z M14 12 L20 8 L36 24 V31Z" fill="#f6efe4" />
        <path d="M1 37 L9 31 L17 37Z" fill="#e23b20" />
        <rect y="38.500" width="37" height="1" fill="#2e2a86" />
        <LText x={2} y={46} s={9.5} w={34} c="#2e2a86" b>спарта</LText>
        <rect y="48" width="37" height="1" fill="#2e2a86" />
      </svg>
      <svg viewBox="0 0 50 50" className="ml-px h-[50px] w-[50px] bg-white">
        <circle cx="26" cy="26" r="22" fill="#eef0ee" />
        <path d="M9 24 Q8 13 20 8 L18 12 L26 5 L25 10 L36 5 L33 10 L42 12 L37 14 L42 22 L34 19 L36 24 L28 20 L25 24 L21 19 L17 24 L15 20Z" fill="#1d9c3c" />
        <path d="M10 28 Q20 31 39 28 Q41 40 27 43 Q12 42 10 28Z" fill="#141414" />
        <rect x="20" y="38" width="6" height="1.500" fill="#fff" />
        <LText x={7} y={28.5} s={6} w={37} c="#dc4a3a" b>КАЗАХОЙЛ АКТОБЕ</LText>
      </svg>
      <svg viewBox="0 0 63 50" className="h-[50px] w-[63px] bg-white">
        {["А", "К", "А", "Т"].map((c, i) => (
          <g key={i}>
            <rect x={5 + i * 13.5} y="15" width="12.500" height="11" fill={i % 2 ? "#111" : "#e8e8e8"} stroke="#999" strokeWidth=".5" />
            <text x={11.2 + i * 13.5} y="25" textAnchor="middle" fontSize="12" fontWeight="bold" fontFamily="'Liberation Serif', serif" fill={i % 2 ? "#fff" : "#111"}>
              {c}
            </text>
          </g>
        ))}
        <LText x={8} y={31} s={5} w={50} c="#222" b f="'Liberation Mono', monospace">МУНАЙ СЕРВИС</LText>
      </svg>
      <svg viewBox="0 0 35 50" className="h-[50px] w-[35px] bg-white">
        <circle cx="17.500" cy="25" r="15.500" fill="#8c8f8f" />
        <path d="M17 1 Q19 9 26 16 Q34 28 24 39 Q17 44 10 39 Q1 28 11 15 Q16 9 17 1Z" fill="#0d9a69" />
        <path d="M16 16 Q14 22 11 26 Q8 35 15 39 Q26 39 23 30 Q17 26 16 16Z" fill="#fff" />
        <path d="M15 26 Q17 32 20 35 Q18 39 14 37Z" fill="#222" />
        <LText x={4} y={48} s={8.5} w={28} c="#4a4a4a" b>KIOGE</LText>
      </svg>
    </footer>
  );
}

export default function App() {
  return (
    <div className="h-[1432px] w-[1264px] overflow-hidden bg-[#d9ebf3] font-['Open_Sans',sans-serif] text-[#444]">
      <Header />
      <div className="grid grid-cols-[145px_980px_139px]">
        <Rates />
        <main>
          <h1 className="mt-[22px] h-[51px] text-center text-[32px] leading-[45px] font-light">Контакты</h1>
          <Contacts />
          <h2 className="mt-[7px] h-[38.420px] text-center text-[26px] leading-[35px] font-bold">Схема проезда</h2>
          <div className="flex h-[21px] items-end justify-center pl-[4px] text-[12px] leading-[17px] tracking-[.04px]">
            <svg viewBox="0 0 17 25" className="mr-[4px] mb-[2px] h-[25px] w-[17px] shrink-0">
              <path fillRule="evenodd" d="M8.500 0 A8.500 8.500 0 0 1 17 8.500 Q16 14 8.500 25 Q1 14 0 8.500 A8.500 8.500 0 0 1 8.500 0Z M8.500 5.200 A3.300 3.300 0 1 0 8.500 11.800 A3.300 3.300 0 1 0 8.500 5.200Z" fill="#3793b1" />
            </svg>
            (НУЖЕН АДРЕС!) г.Уфа, ул.Пархоменко 156/3, офис 503
          </div>
          <MapView />
        </main>
        <MailBadge />
      </div>
      <Partners />
    </div>
  );
}
